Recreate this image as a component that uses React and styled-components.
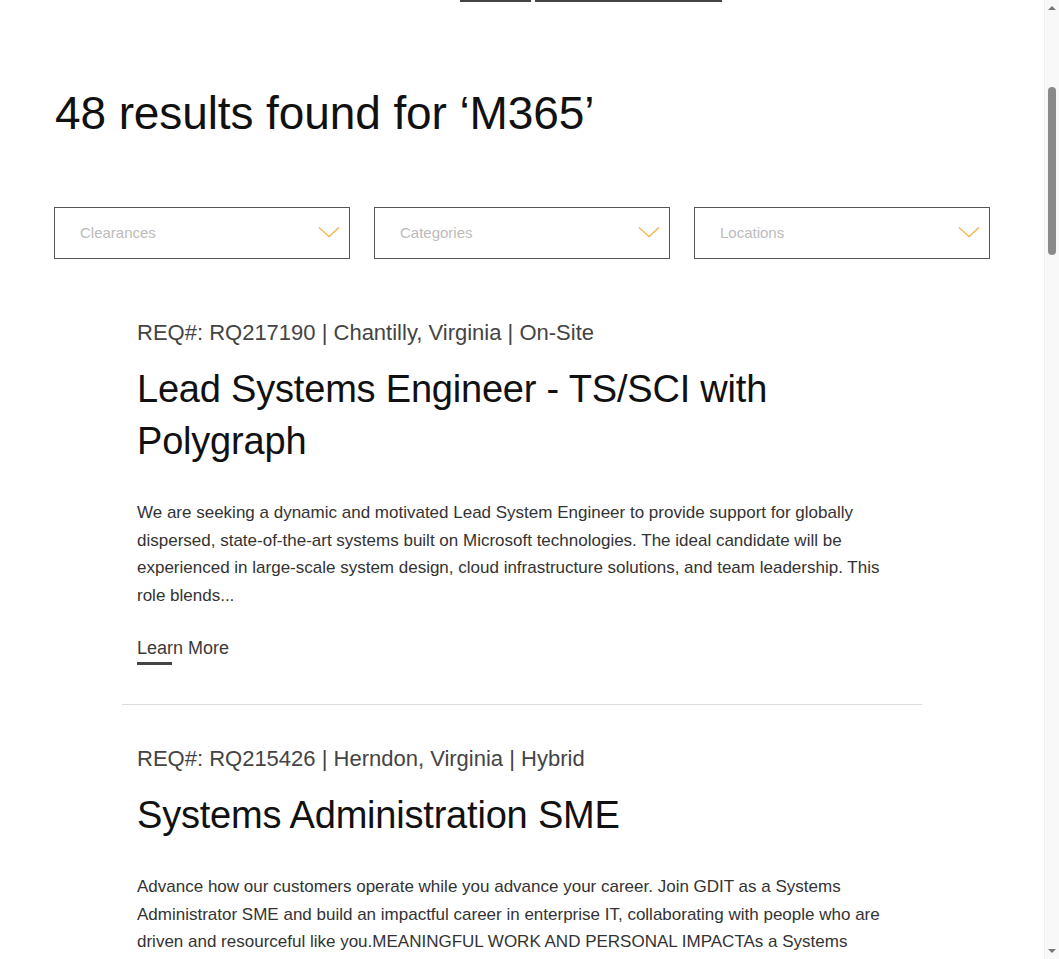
import styled, { createGlobalStyle } from 'styled-components';

const GlobalStyle = createGlobalStyle`
  html, body {
    margin: 0;
    padding: 0;
    background: #fff;
    overflow-x: hidden;
  }
  body {
    font-family: "Liberation Sans", Arial, sans-serif;
    color: #111;
    -webkit-font-smoothing: antialiased;
  }
  * {
    box-sizing: border-box;
  }
`;

const Page = styled.div`
  width: 1044px;
`;

const Wrapper = styled.div`
  width: 936px;
  margin: 0 auto;
  padding-bottom: 80px;
`;

const TopLinkLine = styled.div`
  display: flex;
  gap: 4px;
  margin-left: 406px;
  height: 2px;
`;

const LineSegment = styled.span`
  display: block;
  width: ${({ $w }) => $w}px;
  height: 2px;
  background: #444;
`;

const Heading = styled.h1`
  margin: 84px 0 0 1px;
  font-size: 46px;
  line-height: 55px;
  font-weight: 400;
  letter-spacing: -0.1px;
  color: #111;
`;

const Filters = styled.div`
  display: grid;
  grid-template-columns: repeat(3, 1fr);
  gap: 24px;
  margin-top: 66px;
`;

const FilterBox = styled.button`
  display: flex;
  align-items: center;
  justify-content: space-between;
  height: 52px;
  padding: 0 9px 2px 25px;
  border: 1px solid #555;
  background: #fff;
  font-family: inherit;
  font-size: 15px;
  color: #bbb;
  cursor: pointer;
  text-align: left;
`;

const Chevron = () => (
  <svg width="22" height="12" viewBox="0 0 22 12" fill="none">
    <path d="M1 1.5 L11 10.5 L21 1.5" stroke="#f4b556" strokeWidth="1.5" strokeLinejoin="round" />
  </svg>
);

const Results = styled.div`
  width: 800px;
  margin: 20px auto 0;
`;

const Listing = styled.article`
  padding: 40px 15px 39px;
  border-bottom: 1px solid #ddd;
`;

const Meta = styled.div`
  font-size: 22px;
  line-height: 28px;
  color: #444;
`;

const JobTitle = styled.h2`
  margin: 16px 0 0;
  font-size: 38px;
  line-height: 52px;
  font-weight: 400;
  letter-spacing: -0.2px;
  color: #111;
`;

const Description = styled.p`
  margin: 32px 0 0;
  max-width: 770px;
  font-size: 17px;
  line-height: 27.7px;
  color: #333;
`;

const LearnMore = styled.a`
  display: inline-block;
  margin-top: 27px;
  font-size: 18px;
  line-height: 22px;
  color: #3a3a3a;
  text-decoration: none;
  cursor: pointer;

  &::after {
    content: '';
    display: block;
    width: 35px;
    height: 3px;
    margin-top: 3px;
    background: #444;
  }
`;

/* browser scrollbar as seen in the screenshot, drawn over the page edge */
const ScrollTrack = styled.div`
  position: fixed;
  top: 0;
  right: 0;
  width: 15px;
  height: 100vh;
  background: #f8f8f8;
  border-left: 1px solid #efefef;
`;

const ScrollThumb = styled.div`
  position: absolute;
  left: 3px;
  top: 87px;
  width: 8px;
  height: 168px;
  border-radius: 4px;
  background: #8a8a8a;
`;

const ScrollArrow = styled.div`
  position: absolute;
  left: 3px;
  width: 0;
  height: 0;
  border-left: 4px solid transparent;
  border-right: 4px solid transparent;
  ${({ $down }) => ($down
    ? 'bottom: 6px; border-top: 4px solid #777;'
    : 'top: 6px; border-bottom: 4px solid #777;')}
`;

const jobs = [
  {
    id: 'RQ217190',
    location: 'Chantilly, Virginia',
    type: 'On-Site',
    title: 'Lead Systems Engineer - TS/SCI with Polygraph',
    text: 'We are seeking a dynamic and motivated Lead System Engineer to provide support for globally dispersed, state-of-the-art systems built on Microsoft technologies. The ideal candidate will be experienced in large-scale system design, cloud infrastructure solutions, and team leadership. This role blends...',
  },
  {
    id: 'RQ215426',
    location: 'Herndon, Virginia',
    type: 'Hybrid',
    title: 'Systems Administration SME',
    text: 'Advance how our customers operate while you advance your career. Join GDIT as a Systems Administrator SME and build an impactful career in enterprise IT, collaborating with people who are driven and resourceful like you.MEANINGFUL WORK AND PERSONAL IMPACTAs a Systems Administrator SME...',
  },
  {
    id: 'RQ214873',
    location: 'Falls Church, Virginia',
    type: 'On-Site',
    title: 'Microsoft 365 Engineer',
    text: 'Join GDIT as a Microsoft 365 Engineer and help modernize collaboration and messaging services for mission-critical customers across the enterprise...',
  },
];

const filters = ['Clearances', 'Categories', 'Locations'];

const App = () => (
  <Page>
    <GlobalStyle />
    <Wrapper>
      <TopLinkLine>
        <LineSegment $w={71} />
        <LineSegment $w={187} />
      </TopLinkLine>
      <Heading>48 results found for ‘M365’</Heading>
      <Filters>
        {filters.map((f) => (
          <FilterBox key={f}>
            {f}
            <Chevron />
          </FilterBox>
        ))}
      </Filters>
      <Results>
        {jobs.map((job) => (
          <Listing key={job.id}>
            <Meta>REQ#: {job.id} | {job.location} | {job.type}</Meta>
            <JobTitle>{job.title}</JobTitle>
            <Description>{job.text}</Description>
            <LearnMore>Learn More</LearnMore>
          </Listing>
        ))}
      </Results>
    </Wrapper>
    <ScrollTrack>
      <ScrollArrow />
      <ScrollThumb />
      <ScrollArrow $down />
    </ScrollTrack>
  </Page>
);

export default App;
